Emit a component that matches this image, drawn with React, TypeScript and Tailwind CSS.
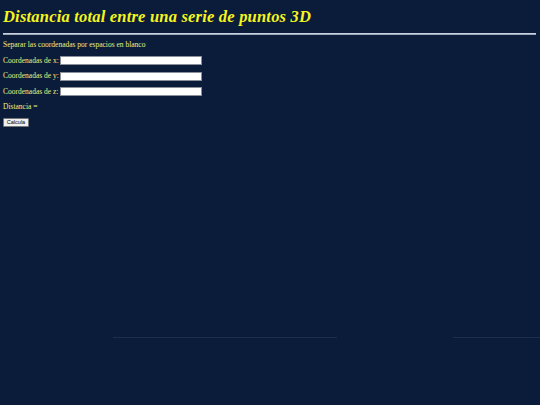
import React from "react";

export default function App() {
  const serif = { fontFamily: '"Liberation Serif", "DejaVu Serif", serif' };
  return (
    <div className="w-[540px] h-[405px] bg-[#0b1c3a] overflow-hidden text-[#eeee80]" style={serif}>
      <div className="px-[3px] pt-[9px]">
        <h1 className="text-[16.5px] leading-[16px] font-bold italic text-[#f5f51e] tracking-[0.2px]">
          Distancia total entre una serie de puntos 3D
        </h1>
        <div className="mt-[8px] h-[2px] w-[533px] bg-[#9aa6bb] border-t border-[#c9d0dc]" />
        <p className="mt-[5px] text-[7.5px] leading-[9px]">Separar las coordenadas por espacios en blanco</p>
        <div className="mt-[6.5px] flex flex-col gap-[5.5px]">
          {["x", "y", "z"].map((c) => (
            <div key={c} className="flex items-center h-[10px] text-[7.5px]">
              <span className="w-[57px] whitespace-nowrap">Coordenadas de {c}:</span>
              <div className="w-[142px] h-[9px] bg-white border border-[#8a8f99]" />
            </div>
          ))}
        </div>
        <p className="mt-[5.5px] text-[7.5px] leading-[9px]">Distancia =</p>
        <div className="mt-[7px] flex">
          <button
            className="h-[9px] w-[26px] flex items-center justify-center bg-[#efefef] border border-[#767676] rounded-[1px] text-black text-[5.5px] leading-none"
            style={{ fontFamily: '"Liberation Sans", Arial, sans-serif' }}
          >
            Calcula
          </button>
        </div>
      </div>
      <div className="mt-[210px] flex items-center">
        <div className="w-[113px]" />
        <div className="w-[224px] h-px bg-[#1d2d4b]" />
        <div className="w-[116px]" />
        <div className="flex-1 h-px bg-[#1d2d4b]" />
      </div>
    </div>
  );
}
